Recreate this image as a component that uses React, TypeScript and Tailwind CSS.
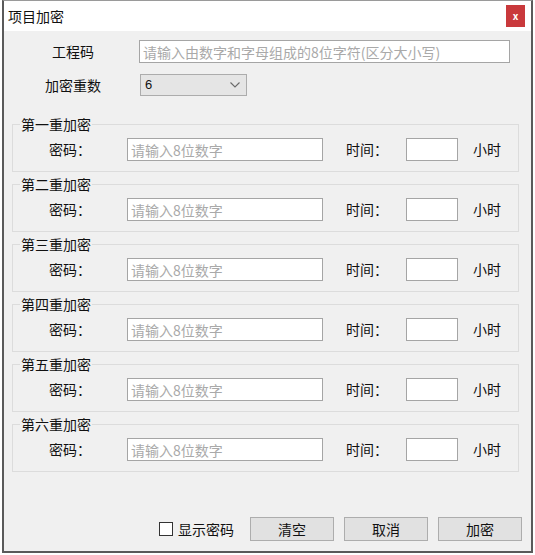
const groups = ["第一重加密", "第二重加密", "第三重加密", "第四重加密", "第五重加密", "第六重加密"];

const PasswordGroup = ({ title }: { title: string }) => (
  <fieldset className="border border-[#dcdcdc] pt-[5px] pb-[10px] mb-[3px]">
    <legend className="ml-[7px] px-[1px] text-[14px] leading-[18px]">{title}</legend>
    <div className="flex items-center h-[23px]">
      <span className="ml-[36px] w-[78px] text-[14px]">密码：</span>
      <input
        className="w-[196px] h-[23px] bg-white border border-[#a5a5a5] px-[3px] text-[14px] outline-none placeholder:text-[#a9a9a9]"
        placeholder="请输入8位数字"
      />
      <span className="ml-[23px] w-[60px] text-[14px]">时间：</span>
      <input className="w-[52px] h-[23px] bg-white border border-[#a5a5a5] px-[3px] text-[14px] outline-none" />
      <span className="ml-[15px] text-[14px]">小时</span>
    </div>
  </fieldset>
);

export default function App() {
  return (
    <div className="w-[535px] h-[555px] bg-white font-['Noto_Sans_CJK_SC',sans-serif] text-[#111]">
      <div className="ml-[2px] w-[531px] h-[553px] border-2 border-t border-[#5a5a5a] border-t-[#9a9a9a] flex flex-col">
        {/* Title bar */}
        <div className="h-[30px] shrink-0 bg-white flex items-center justify-between pl-[4px] pr-[6px]">
          <span className="text-[14px] leading-none">项目加密</span>
          <button className="w-[19px] h-[22px] bg-[#c9393c] text-white text-[10px] font-bold leading-none flex items-center justify-center">
            x
          </button>
        </div>

        {/* Body */}
        <div className="flex-1 bg-[#f0f0f0] flex flex-col">
          <div className="flex items-center h-[23px] mt-[9px]">
            <span className="ml-[9px] w-[120px] text-center text-[14px]">工程码</span>
            <input
              className="ml-[6px] w-[371px] h-[23px] bg-white border border-[#a5a5a5] px-[3px] text-[14px] outline-none placeholder:text-[#a9a9a9]"
              placeholder="请输入由数字和字母组成的8位字符(区分大小写)"
            />
          </div>

          <div className="flex items-center h-[22px] mt-[11px]">
            <span className="ml-[9px] w-[120px] text-center text-[14px]">加密重数</span>
            <div className="ml-[7px] w-[107px] h-[22px] bg-[#e5e5e5] border border-[#acacac] flex items-center justify-between pl-[4px] pr-[6px]">
              <span className="text-[13px] font-['Liberation_Sans',sans-serif]">6</span>
              <svg width="10" height="6" viewBox="0 0 10 6">
                <polyline points="0.5,0.5 5,5 9.5,0.5" fill="none" stroke="#6a6a6a" strokeWidth="1.1" />
              </svg>
            </div>
          </div>

          <div className="mt-[19px] ml-[8px] w-[507px] flex flex-col">
            {groups.map((g) => (
              <PasswordGroup key={g} title={g} />
            ))}
          </div>

          {/* Footer */}
          <div className="mt-auto mb-[10px] mr-[9px] flex items-center justify-end">
            <span className="w-[14px] h-[14px] bg-white border border-[#333]" />
            <span className="ml-[5px] text-[14px]">显示密码</span>
            <button className="ml-[16px] w-[84px] h-[24px] bg-[#e1e1e1] border border-[#adadad] text-[14px]">清空</button>
            <button className="ml-[10px] w-[84px] h-[24px] bg-[#e1e1e1] border border-[#adadad] text-[14px]">取消</button>
            <button className="ml-[10px] w-[84px] h-[24px] bg-[#e1e1e1] border border-[#adadad] text-[14px]">加密</button>
          </div>
        </div>
      </div>
    </div>
  );
}
